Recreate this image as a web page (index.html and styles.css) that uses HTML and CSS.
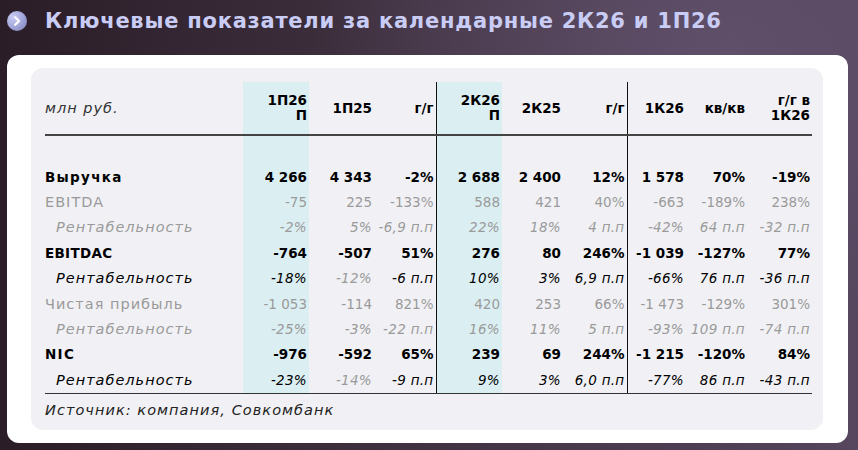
FILE: index.html
```html
<!DOCTYPE html>
<html lang="ru">
<head>
<meta charset="utf-8">
<title>Ключевые показатели</title>
<link rel="stylesheet" href="styles.css">
</head>
<body>
<div class="page">
  <header class="head">
    <span class="bullet">
      <svg viewBox="0 0 20 20" width="20" height="20"><path d="M8.2 6.2 L12 10 L8.2 13.8" fill="none" stroke="#fff" stroke-width="2.2" stroke-linecap="round" stroke-linejoin="round"/></svg>
    </span>
    <h1 class="title">Ключевые показатели за календарные 2К26 и 1П26</h1>
  </header>
  <section class="card">
    <div class="panel">
      <table class="tbl">
        <colgroup>
          <col class="w-label"><col class="w66"><col class="w65"><col class="w62"><col class="w66"><col class="w61"><col class="w64"><col class="w59"><col class="w61"><col class="w65">
        </colgroup>
        <thead>
          <tr class="hrow">
            <th class="lbl unit">млн руб.</th>
            <th class="hl">1П26<br>П</th>
            <th>1П25</th>
            <th>г/г</th>
            <th class="hl vl">2К26<br>П</th>
            <th>2К25</th>
            <th>г/г</th>
            <th class="vl">1К26</th>
            <th>кв/кв</th>
            <th>г/г в<br>1К26</th>
          </tr>
        </thead>
        <tbody>
          <tr class="spacer">
            <td></td><td class="hl"></td><td></td><td></td><td class="hl vl"></td><td></td><td></td><td class="vl"></td><td></td><td></td>
          </tr>
          <tr class="row bold">
            <td class="lbl wide">Выручка</td>
            <td class="hl">4&nbsp;266</td><td>4&nbsp;343</td><td>-2%</td>
            <td class="hl vl">2&nbsp;688</td><td>2&nbsp;400</td><td>12%</td>
            <td class="vl">1&nbsp;578</td><td>70%</td><td>-19%</td>
          </tr>
          <tr class="row gray">
            <td class="lbl">EBITDA</td>
            <td class="hl">-75</td><td>225</td><td>-133%</td>
            <td class="hl vl">588</td><td>421</td><td>40%</td>
            <td class="vl">-663</td><td>-189%</td><td>238%</td>
          </tr>
          <tr class="row gray ital">
            <td class="lbl sub">Рентабельность</td>
            <td class="hl">-2%</td><td>5%</td><td>-6,9 п.п</td>
            <td class="hl vl">22%</td><td>18%</td><td>4 п.п</td>
            <td class="vl">-42%</td><td>64 п.п</td><td>-32 п.п</td>
          </tr>
          <tr class="row bold">
            <td class="lbl">EBITDAC</td>
            <td class="hl">-764</td><td>-507</td><td>51%</td>
            <td class="hl vl">276</td><td>80</td><td>246%</td>
            <td class="vl">-1&nbsp;039</td><td>-127%</td><td>77%</td>
          </tr>
          <tr class="row ital">
            <td class="lbl sub">Рентабельность</td>
            <td class="hl">-18%</td><td class="muted">-12%</td><td>-6 п.п</td>
            <td class="hl vl">10%</td><td>3%</td><td>6,9 п.п</td>
            <td class="vl">-66%</td><td>76 п.п</td><td>-36 п.п</td>
          </tr>
          <tr class="row gray">
            <td class="lbl">Чистая прибыль</td>
            <td class="hl">-1&nbsp;053</td><td>-114</td><td>821%</td>
            <td class="hl vl">420</td><td>253</td><td>66%</td>
            <td class="vl">-1&nbsp;473</td><td>-129%</td><td>301%</td>
          </tr>
          <tr class="row gray ital">
            <td class="lbl sub">Рентабельность</td>
            <td class="hl">-25%</td><td>-3%</td><td>-22 п.п</td>
            <td class="hl vl">16%</td><td>11%</td><td>5 п.п</td>
            <td class="vl">-93%</td><td>109 п.п</td><td>-74 п.п</td>
          </tr>
          <tr class="row bold">
            <td class="lbl wide">NIC</td>
            <td class="hl">-976</td><td>-592</td><td>65%</td>
            <td class="hl vl">239</td><td>69</td><td>244%</td>
            <td class="vl">-1&nbsp;215</td><td>-120%</td><td>84%</td>
          </tr>
          <tr class="row ital last">
            <td class="lbl sub">Рентабельность</td>
            <td class="hl">-23%</td><td class="muted">-14%</td><td>-9 п.п</td>
            <td class="hl vl">9%</td><td>3%</td><td>6,0 п.п</td>
            <td class="vl">-77%</td><td>86 п.п</td><td>-43 п.п</td>
          </tr>
        </tbody>
      </table>
      <p class="source">Источник: компания, Совкомбанк</p>
    </div>
  </section>
</div>
</body>
</html>
```
FILE: styles.css
```css
html, body {
  margin: 0;
  padding: 0;
}
body {
  width: 858px;
  height: 450px;
  overflow: hidden;
  font-family: "DejaVu Sans", "Noto Sans", sans-serif;
  background: radial-gradient(ellipse 70% 90% at 85% 10%, #5f4f69 0%, rgba(95,79,105,0) 70%),
              linear-gradient(90deg, #2a1d27 0%, #3d2e3c 40%, #56465e 100%);
}
.page {
  display: flex;
  flex-direction: column;
  padding: 0 10px 0 7px;
}
.head {
  display: flex;
  align-items: center;
  height: 55px;
  gap: 18px;
  padding-bottom: 13px;
  box-sizing: border-box;
}
.bullet {
  width: 20px;
  height: 20px;
  border-radius: 50%;
  background: radial-gradient(circle at 30% 30%, #c9cdf4 0%, #9ea2d6 55%, #7b7eb3 100%);
  display: flex;
  align-items: center;
  justify-content: center;
  flex: none;
}
.bullet svg { display: block; }
.title {
  margin: 0;
  font-size: 21px;
  font-weight: bold;
  color: #c9cdf5;
  letter-spacing: 0.75px;
  white-space: nowrap;
}
.card {
  background: #ffffff;
  border-radius: 12px;
  padding: 13px 25px 13px 24px;
  height: 388px;
  box-sizing: border-box;
}
.panel {
  background: #f1f1f5;
  border-radius: 12px;
  padding: 14px 11px 0 14px;
  height: 362px;
  box-sizing: border-box;
}
.tbl {
  width: 767px;
  table-layout: fixed;
  border-collapse: collapse;
  font-size: 13.5px;
  color: #000;
}
.w-label { width: 198px; }
.w66 { width: 66px; }
.w65 { width: 65px; }
.w62 { width: 62px; }
.w61 { width: 61px; }
.w64 { width: 64px; }
.w59 { width: 59px; }
.tbl th, .tbl td {
  padding: 0 2px 0 0;
  text-align: right;
  white-space: nowrap;
  vertical-align: middle;
}
.hrow th {
  height: 52px;
  line-height: 15px;
  font-weight: bold;
  border-bottom: 2px solid #444;
}
.tbl .lbl {
  text-align: left;
  padding: 0;
  font-size: 14.5px;
  letter-spacing: 1px;
}
.bold .lbl { font-size: 13.5px; letter-spacing: 0.3px; }
.bold .wide { letter-spacing: 1.3px; }
.hrow .unit {
  font-weight: normal;
  font-style: italic;
  color: #333;
  letter-spacing: 1px;
}
.spacer td { height: 28px; }
.row td {
  height: 25.4px;
  line-height: 16px;
}
.hl { background: #dbeff3; }
.vl { border-left: 1px solid #111; }
.bold td { font-weight: bold; color: #000; }
.gray td { color: #9a9a9a; }
.ital td { font-style: italic; letter-spacing: 0.3px; }
.tbl .sub { padding-left: 11px; }
.tbl .muted { color: #9a9a9a; }
.last td { border-bottom: 1.5px solid #333; }
.source {
  margin: 8px 0 0;
  font-size: 14.5px;
  font-style: italic;
  color: #222;
  letter-spacing: 1.05px;
}
```
